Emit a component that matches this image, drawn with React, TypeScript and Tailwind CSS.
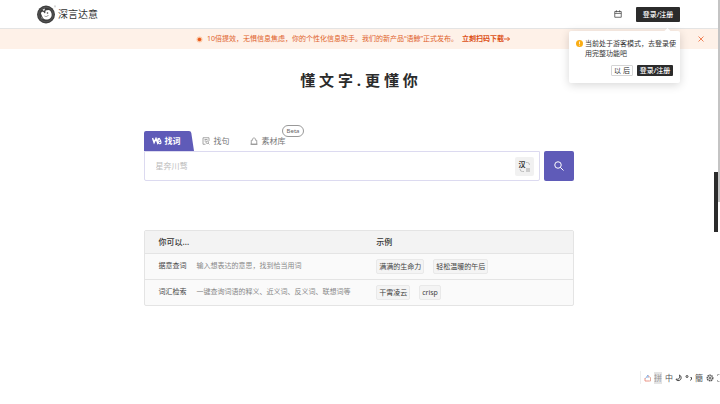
import type { ReactNode } from "react";

const rows = [
  {
    name: "据意查词",
    text: "输入想表达的意思，找到恰当用词",
    samples: ["满满的生命力", "轻松温暖的午后"],
  },
  {
    name: "词汇检索",
    text: "一键查询词语的释义、近义词、反义词、联想词等",
    samples: ["干霄凌云", "crisp"],
  },
];

function Logo() {
  return (
    <svg viewBox="0 0 38 38" className="h-[19px] w-[19px]" aria-hidden="true">
      <circle cx="18" cy="19" r="18" fill="#3f3f3f" />
      <circle cx="18" cy="19" r="14.5" fill="none" stroke="#6d6d6d" strokeWidth="1" />
      <path
        d="M8 17c0-3 3-4 5-3l3 3 1-3c-1-2 1-4 3-3 3-2 7 0 8 3 2 4 2 9-1 12-4 4-11 4-14 1-2-2-3-5-5-10z"
        fill="#fff"
      />
      <path d="M11 9l4-2 1 3-3 2zM8 22l3 5-1 1z" fill="#ddd" />
      <circle cx="21" cy="16" r="1.6" fill="#3f3f3f" />
      <path d="M15 22c3 2 6 1 8-2" fill="none" stroke="#777" strokeWidth="1.5" />
      <path d="M34 2h4M36 2v3" stroke="#aaa" strokeWidth="1" />
    </svg>
  );
}

function CalendarIcon() {
  return (
    <svg viewBox="0 0 16 16" className="h-2 w-2" fill="none" stroke="#4a4a4a" strokeWidth="1.6" aria-hidden="true">
      <path d="M1.5 3h13v11.5h-13zM1.5 6.8h13M4.8 0.5v4M11.2 0.5v4" />
    </svg>
  );
}

function WordIcon() {
  return (
    <svg viewBox="0 0 20 16" className="h-2 w-2.5" fill="none" stroke="#fff" strokeWidth="3" aria-hidden="true">
      <path d="M1 2l3.2 9L8 3l3 8 2-9" />
      <circle cx="15.5" cy="11" r="2.6" strokeWidth="2.2" />
      <path d="M14 2l4 7" strokeWidth="2.4" />
    </svg>
  );
}

function SentenceIcon() {
  return (
    <svg viewBox="0 0 16 16" className="h-2 w-2" fill="none" stroke="#8a8a8a" strokeWidth="1.5" aria-hidden="true">
      <path d="M14 8V1.5H2v13h5M5 5h6M5 8h3" />
      <circle cx="10.5" cy="10.5" r="2.5" />
      <path d="M12.3 12.3l2.5 2.5" />
    </svg>
  );
}

function LibraryIcon() {
  return (
    <svg viewBox="0 0 16 16" className="h-2 w-2" fill="none" stroke="#8a8a8a" strokeWidth="1.6" aria-hidden="true">
      <path d="M2.5 14.5V6.5H5C5 3.5 6.5 1.5 8 1.5s3 2 3 5h2.5v8z" />
      <path d="M1 14.5h14" />
    </svg>
  );
}

function Chip({ children }: { children: ReactNode }) {
  return (
    <button className="h-[15px] rounded-[2px] border border-[#e9e9e9] bg-[#f4f4f4] px-[2px] text-[7px] leading-[13px] text-[#444]">
      {children}
    </button>
  );
}

function Header() {
  return (
    <header className="relative flex h-[29px] items-center justify-between border-b border-[#e4e4e4] pr-[38px] pl-[37px]">
      <a href="#" className="flex items-center gap-[2px] text-[10px] leading-[14px] text-[#333]">
        <Logo />
        深言达意
      </a>
      <div className="flex items-center gap-[14px]">
        <button aria-label="日历">
          <CalendarIcon />
        </button>
        <button className="h-[15px] w-11 rounded-[1px] bg-[#2b2b2b] text-[7px] leading-[15px] font-medium text-white">
          登录/注册
        </button>
      </div>
      <LoginTip />
    </header>
  );
}

function LoginTip() {
  return (
    <div
      role="dialog"
      aria-label="登录提示"
      className="absolute top-[31px] right-[38px] z-10 w-[111px] rounded-[2px] bg-white pt-2 pb-[7px] shadow-[0_2px_10px_rgba(0,0,0,0.16)]"
    >
      <span className="absolute -top-[2px] right-[10px] h-[5px] w-[5px] rotate-45 bg-white" />
      <div className="flex gap-[2px] pl-[7px]">
        <svg viewBox="0 0 14 14" className="mt-[1px] h-[7px] w-[7px] shrink-0" aria-hidden="true">
          <circle cx="7" cy="7" r="7" fill="#faad14" />
          <path d="M7 3v5M7 9.4v1.8" stroke="#fff" strokeWidth="1.6" />
        </svg>
        <p className="text-[7px] leading-[10px] whitespace-nowrap text-[#333]">
          当前处于游客模式，去登录使
          <br />
          用完整功能吧
        </p>
      </div>
      <div className="mt-[6px] flex justify-end gap-1 pr-[7px]">
        <button className="h-[11px] w-[22px] rounded-[1px] border border-[#d5d5d5] text-[7px] leading-[9px] text-[#333]">
          以 后
        </button>
        <button className="h-[11px] w-9 rounded-[1px] bg-[#2b2b2b] text-[7px] leading-[11px] font-medium text-white">
          登录/注册
        </button>
      </div>
    </div>
  );
}

function Banner() {
  return (
    <div className="flex h-5 items-center bg-[#fef1e8] pr-[14px] pl-2 text-[7px] leading-[10px] whitespace-nowrap text-[#e0622b]">
      <div className="flex flex-1 items-center justify-center gap-1">
        <svg viewBox="0 0 14 14" className="h-[7px] w-[7px]" aria-hidden="true">
          <circle cx="7" cy="7" r="6" fill="#fbc9a8" />
          <circle cx="7" cy="7" r="3.6" fill="#ea5a1c" />
        </svg>
        <span>10倍提效，无惧信息焦虑，你的个性化信息助手。我们的新产品“语鲸”正式发布。</span>
        <a href="#" className="flex items-center font-bold text-[#dc4f14]">
          立刻扫码下载
          <svg viewBox="0 0 12 12" className="h-[6px] w-[6px]" fill="none" stroke="#dc4f14" strokeWidth="1.8" aria-hidden="true">
            <path d="M0 6h11M7 2l4 4-4 4" />
          </svg>
        </a>
      </div>
      <button aria-label="关闭">
        <svg viewBox="0 0 12 12" className="h-[6px] w-[6px]" stroke="#ee7648" strokeWidth="1.8" aria-hidden="true">
          <path d="M1 1l10 10M11 1L1 11" />
        </svg>
      </button>
    </div>
  );
}

function Search() {
  return (
    <section>
      <nav className="flex h-5 items-center text-[8px] leading-3 text-[#777]">
        <button className="relative flex h-5 w-[50px] items-center pl-2 font-bold text-white">
          <svg viewBox="0 0 50 20" className="absolute inset-0 h-5 w-[50px]" aria-hidden="true">
            <path d="M0 20V2q0-2 2-2h43q2 0 2.300 2L50 20z" fill="#5f5bb8" />
          </svg>
          <span className="relative flex items-center gap-[3px]">
            <WordIcon />
            找词
          </span>
        </button>
        <button className="ml-2 flex items-center gap-1">
          <SentenceIcon />
          找句
        </button>
        <button className="relative ml-5 flex items-center gap-1">
          <LibraryIcon />
          素材库
          <span className="absolute -top-[10px] left-8 h-3 rounded-full border border-[#999] bg-white px-1 text-[6px] leading-[10px] text-[#666]">
            Beta
          </span>
        </button>
      </nav>
      <form className="flex h-[30px] gap-1" onSubmit={(e) => e.preventDefault()}>
        <div className="flex flex-1 items-center rounded-b-[2px] border border-[#dcdaf0] bg-white pr-[5px] pl-[11px]">
          <input
            aria-label="找词"
            placeholder="星奔川骛"
            className="min-w-0 flex-1 text-[8px] leading-3 outline-none placeholder:text-[#bdbdbd]"
          />
          <button type="button" aria-label="切换语言" className="relative h-[19px] w-[19px] rounded-[2px] bg-[#f1f1f1] text-[#333]">
            <span className="absolute top-[4px] left-[3px] text-[7px] leading-[8px] font-bold">汉</span>
            <svg viewBox="0 0 19 19" className="h-[19px] w-[19px]" fill="none" stroke="#bbb" aria-hidden="true">
              <path d="M11 5.500h1.500q2 0 2 2.500M5 12q0 2.500 2.500 2.500H9" />
              <rect x="11.500" y="11.500" width="3" height="3" fill="#ccc" stroke="#ccc" />
            </svg>
          </button>
        </div>
        <button aria-label="搜索" className="flex w-[30px] items-center justify-center rounded-[2px] bg-[#5f5bb8]">
          <svg viewBox="0 0 20 20" className="h-[10px] w-[10px]" fill="none" stroke="#fff" strokeWidth="2" aria-hidden="true">
            <circle cx="8" cy="8" r="6.5" />
            <path d="M12.500 12.500L19 19" />
          </svg>
        </button>
      </form>
    </section>
  );
}

function Guide() {
  return (
    <div className="mt-[49px] overflow-hidden rounded-[2px] border border-[#e4e4e4] bg-[#fafafa]">
      <table className="w-full table-fixed text-left">
        <thead>
          <tr className="h-[22px] bg-[#f3f3f3] text-[8px] leading-3 text-[#333]">
            <th className="w-[54%] pl-[14px] font-medium">你可以...</th>
            <th className="font-medium">示例</th>
          </tr>
        </thead>
        <tbody>
          {rows.map((row) => (
            <tr key={row.name} className="h-[26px] border-t border-[#e4e4e4] text-[7px] leading-[10px]">
              <td className="pl-[14px] whitespace-nowrap">
                <span className="text-[#444]">{row.name}</span>
                <span className="ml-[10px] text-[#888]">{row.text}</span>
              </td>
              <td>
                <div className="flex gap-[9px]">
                  {row.samples.map((s) => (
                    <Chip key={s}>{s}</Chip>
                  ))}
                </div>
              </td>
            </tr>
          ))}
        </tbody>
      </table>
    </div>
  );
}

function InputBar() {
  return (
    <div className="fixed right-0 bottom-5 flex h-[13px] items-center gap-[2px] border-l border-[#eee] bg-white pl-[3px] text-[8px] leading-3 text-[#555]">
      <svg viewBox="0 0 16 16" className="h-2 w-2" fill="none" strokeWidth="1.8" aria-hidden="true">
        <path d="M3 9l5-7v6" stroke="#7aa7e0" />
        <path d="M2 8v6h8" stroke="#e98b7c" />
        <path d="M8 4l5 3v7h-3" stroke="#e3a090" />
      </svg>
      <span className="bg-[#e4e4e4] text-[#999]">拼</span>
      <span className="ml-[1px]">中</span>
      <svg viewBox="0 0 16 16" className="h-2 w-2" fill="none" stroke="#444" strokeWidth="2" aria-hidden="true">
        <path d="M9 2c5 3 4 10-1 11-3 1-6-1-6-3 5 2 9-2 7-8z" />
      </svg>
      <svg viewBox="0 0 16 16" className="h-2 w-2" fill="none" stroke="#444" strokeWidth="2" aria-hidden="true">
        <circle cx="4" cy="5" r="2" />
        <path d="M11 7h2v3l-2 3" />
      </svg>
      <span>簡</span>
      <svg viewBox="0 0 16 16" className="ml-[1px] h-2 w-2" fill="none" stroke="#555" aria-hidden="true">
        <circle cx="8" cy="8" r="5.500" strokeWidth="3" strokeDasharray="3 1" />
        <circle cx="8" cy="8" r="2" strokeWidth="2" />
      </svg>
      <svg viewBox="0 0 6 16" className="ml-[1px] h-2 w-[3px]" fill="none" stroke="#aaa" strokeWidth="2" aria-hidden="true">
        <path d="M1 4V1h4M1 12v3h4" />
      </svg>
    </div>
  );
}

export default function App() {
  return (
    <div className="min-h-screen bg-white pr-[2px] font-['Noto_Sans','Noto_Sans_CJK_SC',sans-serif]" lang="zh-CN">
      <Header />
      <Banner />
      <main className="mx-auto w-3/5">
        <h1 className="mt-5 mb-[40px] text-center text-[15px] leading-[22px] font-bold text-[#2b2b2b]">
          懂 文 字 . 更 懂 你
        </h1>
        <Search />
        <Guide />
      </main>
      <InputBar />
      <div className="fixed top-0 right-0 h-1/2 w-[2px] bg-[#c4c4c4]" />
      <div className="fixed top-[172px] right-[2px] h-[60px] w-1 bg-[#2b2b2b]" />
    </div>
  );
}
